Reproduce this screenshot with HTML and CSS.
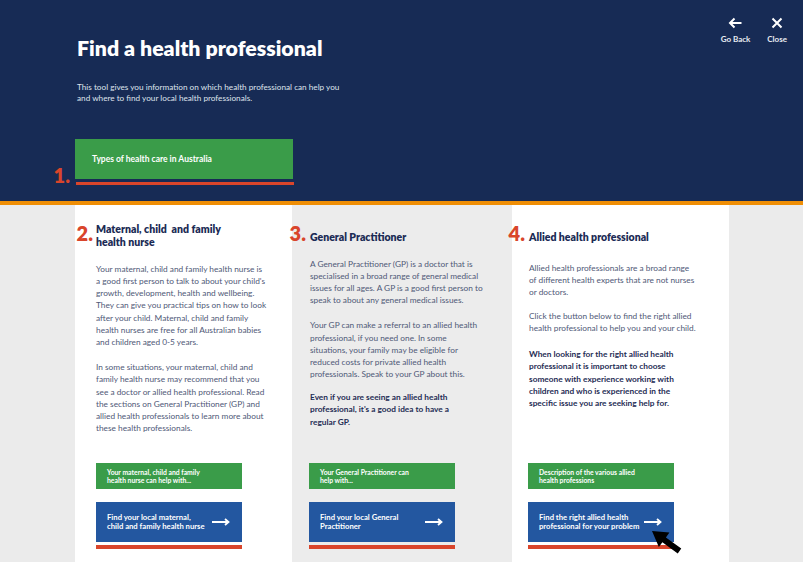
FILE: index.html
```html
<!DOCTYPE html>
<html lang="en">
<head>
<meta charset="utf-8">
<title>Find a health professional</title>
<link rel="stylesheet" href="styles.css">
</head>
<body>
<div class="page">
  <header class="hero">
    <div class="hero-main">
      <h1 class="hero-title">Find a health professional</h1>
      <p class="hero-intro">This tool gives you information on which health professional can help you<br>and where to find your local health professionals.</p>
      <div class="hero-action">
        <span class="step-num step-num-hero">1.</span>
        <a class="btn-types" href="#">Types of health care in Australia</a>
        <div class="mark-bar mark-bar-wide"></div>
      </div>
    </div>
    <nav class="hero-nav">
      <a class="nav-item" href="#">
        <svg class="nav-icon" width="14" height="14" viewBox="0 0 14 14" aria-hidden="true"><path d="M13.5 7H2M6.5 2.5L2 7l4.5 4.5" fill="none" stroke="#fff" stroke-width="2" stroke-linecap="butt" stroke-linejoin="miter"/></svg>
        <span class="nav-label">Go Back</span>
      </a>
      <a class="nav-item" href="#">
        <svg class="nav-icon" width="14" height="14" viewBox="0 0 14 14" aria-hidden="true"><path d="M2.5 2.5l9 9M11.5 2.5l-9 9" fill="none" stroke="#fff" stroke-width="2"/></svg>
        <span class="nav-label">Close</span>
      </a>
    </nav>
  </header>

  <main class="columns">
    <section class="col col-nurse">
      <div class="col-top">
        <div class="col-head">
          <span class="step-num">2.</span>
          <h2 class="col-title">Maternal, child&nbsp; and family<br>health nurse</h2>
        </div>
        <div class="col-body">
          <p>Your maternal, child and family health nurse is<br>a good first person to talk to about your child's<br>growth, development, health and wellbeing.<br>They can give you practical tips on how to look<br>after your child. Maternal, child and family<br>health nurses are free for all Australian babies<br>and children aged 0-5 years.</p>
          <p>In some situations, your maternal, child and<br>family health nurse may recommend that you<br>see a doctor or allied health professional. Read<br>the sections on General Practitioner (GP) and<br>allied health professionals to learn more about<br>these health professionals.</p>
        </div>
      </div>
      <div class="actions">
        <a class="btn-help" href="#">Your maternal, child and family<br>health nurse can help with...</a>
        <a class="btn-find" href="#"><span>Find your local maternal,<br>child and family health nurse</span><svg class="find-arrow" width="18" height="8" viewBox="0 0 18 8" aria-hidden="true"><path d="M0 4h16M13 1l3.5 3L13 7" fill="none" stroke="#fff" stroke-width="1.8"/></svg></a>
        <div class="mark-bar"></div>
      </div>
    </section>

    <section class="col col-gp">
      <div class="col-top">
        <div class="col-head">
          <span class="step-num">3.</span>
          <h2 class="col-title">General Practitioner</h2>
        </div>
        <div class="col-body">
          <p>A General Practitioner (GP) is a doctor that is<br>specialised in a broad range of general medical<br>issues for all ages. A GP is a good first person to<br>speak to about any general medical issues.</p>
          <p>Your GP can make a referral to an allied health<br>professional, if you need one. In some<br>situations, your family may be eligible for<br>reduced costs for private allied health<br>professionals. Speak to your GP about this.</p>
          <p class="strong">Even if you are seeing an allied health<br>professional, it's a good idea to have a<br>regular GP.</p>
        </div>
      </div>
      <div class="actions">
        <a class="btn-help" href="#">Your General Practitioner can<br>help with...</a>
        <a class="btn-find" href="#"><span>Find your local General<br>Practitioner</span><svg class="find-arrow" width="18" height="8" viewBox="0 0 18 8" aria-hidden="true"><path d="M0 4h16M13 1l3.5 3L13 7" fill="none" stroke="#fff" stroke-width="1.8"/></svg></a>
        <div class="mark-bar"></div>
      </div>
    </section>

    <section class="col col-allied">
      <div class="col-top">
        <div class="col-head">
          <span class="step-num">4.</span>
          <h2 class="col-title">Allied health professional</h2>
        </div>
        <div class="col-body">
          <p>Allied health professionals are a broad range<br>of different health experts that are not nurses<br>or doctors.</p>
          <p>Click the button below to find the right allied<br>health professional to help you and your child.</p>
          <p class="strong">When looking for the right allied health<br>professional it is important to choose<br>someone with experience working with<br>children and who is experienced in the<br>specific issue you are seeking help for.</p>
        </div>
      </div>
      <div class="actions">
        <a class="btn-help" href="#">Description of the various allied<br>health professions</a>
        <a class="btn-find" href="#"><span>Find the right allied health<br>professional for your problem</span><svg class="find-arrow" width="18" height="8" viewBox="0 0 18 8" aria-hidden="true"><path d="M0 4h16M13 1l3.5 3L13 7" fill="none" stroke="#fff" stroke-width="1.8"/></svg></a>
        <div class="mark-bar"></div>
        <svg class="cursor" width="40" height="30" viewBox="0 0 40 30" aria-hidden="true"><polygon transform="translate(1 1) rotate(36)" points="0,0 15,-9 15,-3 34,-3 34,3 15,3 15,9" fill="#000"/></svg>
      </div>
    </section>
  </main>
</div>
</body>
</html>
```

FILE: styles.css
```css
* { box-sizing: border-box; }

html, body {
  margin: 0;
  padding: 0;
}

body {
  background: #ebebeb;
  font-family: "Lato", "Open Sans", sans-serif;
  width: 803px;
  height: 562px;
  overflow: hidden;
}

a { text-decoration: none; color: inherit; }

p { margin: 0; }

.page {
  width: 803px;
}

/* ---------- header ---------- */
.hero {
  display: flex;
  height: 205px;
  background: #172b55;
  border-bottom: 4px solid #ef8e05;
}

.hero-main {
  flex: 1;
  padding-left: 75px;
}

.hero-title {
  margin: 36px 0 0 2px;
  font-size: 21.3px;
  line-height: 25px;
  font-weight: 800;
  color: #ffffff;
  letter-spacing: 0;
}

.hero-intro {
  margin: 21px 0 0 2px;
  font-size: 8.2px;
  line-height: 11px;
  color: #dfe3ec;
}

.hero-action {
  position: relative;
  margin-top: 35px;
  width: 219px;
}

.btn-types {
  display: flex;
  align-items: center;
  width: 218px;
  height: 40px;
  padding-left: 17px;
  background: #3a9c49;
  color: #fff;
  font-size: 8.5px;
  font-weight: 700;
}

.step-num {
  position: absolute;
  top: 0;
  right: calc(100% + 3px);
  font-size: 20px;
  line-height: 20px;
  font-weight: 800;
  color: #d9452b;
}

.step-num-hero {
  top: 26px;
  right: calc(100% + 5px);
}

.mark-bar {
  height: 4px;
  margin-top: 3px;
  background: #d9452b;
}

.mark-bar-wide {
  width: 218px;
  height: 3px;
  margin-left: 1px;
}

.hero-nav {
  display: flex;
  align-items: flex-start;
  gap: 17px;
  padding: 16px 16px 0 0;
}

.nav-item {
  display: flex;
  flex-direction: column;
  align-items: center;
  color: #fff;
}

.nav-icon { display: block; }

.nav-label {
  margin-top: 5px;
  font-size: 8px;
  line-height: 9.6px;
  font-weight: 700;
  color: #e8ebf2;
}

/* ---------- columns ---------- */
.columns {
  display: grid;
  grid-template-columns: 217px 220px 217px;
  width: 654px;
  margin-left: 75px;
  min-height: 360px;
}

.col {
  background: #ffffff;
  padding-left: 21px;
}

.col-gp {
  background: #ececec;
  padding-left: 17px;
}

.col-allied {
  padding-left: 16px;
}

.col-top {
  height: 258px;
  padding-top: 18px;
}

.col-head {
  position: relative;
  height: 25.2px;
}

.col-title {
  margin: 0;
  font-size: 10.5px;
  line-height: 12.6px;
  font-weight: 800;
  color: #1b2b55;
  white-space: nowrap;
}

.col-gp .col-title,
.col-allied .col-title {
  padding-top: 7.7px;
}

.col-gp .col-head,
.col-allied .col-head {
  padding-left: 1px;
}

.col-body {
  margin-top: 14.7px;
  font-size: 8.3px;
  line-height: 12.2px;
  color: #4f5977;
  white-space: nowrap;
}

.col-gp .col-body {
  margin-top: 9.7px;
  padding-left: 1px;
}

.col-allied .col-body {
  margin-top: 14.5px;
  padding-left: 1px;
  line-height: 11.9px;
}

.col-body p + p {
  margin-top: 12.8px;
}

.col-body .strong {
  font-weight: 700;
  color: #1f2d55;
  line-height: 12.4px;
}

.col-gp .col-body .strong {
  margin-top: 10.5px;
}

/* ---------- action buttons ---------- */
.actions {
  position: relative;
  display: flex;
  flex-direction: column;
  width: 146px;
}

.btn-help {
  display: flex;
  align-items: center;
  height: 26px;
  padding-left: 11px;
  background: #3a9c49;
  color: #fff;
  font-size: 6.8px;
  line-height: 8.2px;
  font-weight: 700;
}

.btn-find {
  display: flex;
  align-items: center;
  justify-content: space-between;
  height: 40px;
  margin-top: 13px;
  padding: 0 12px 0 11px;
  background: #2357a0;
  color: #fff;
  font-size: 7.7px;
  line-height: 9.5px;
  font-weight: 700;
}

.find-arrow { display: block; flex: none; }

.cursor {
  position: absolute;
  left: 123px;
  top: 67px;
  overflow: visible;
}
```
